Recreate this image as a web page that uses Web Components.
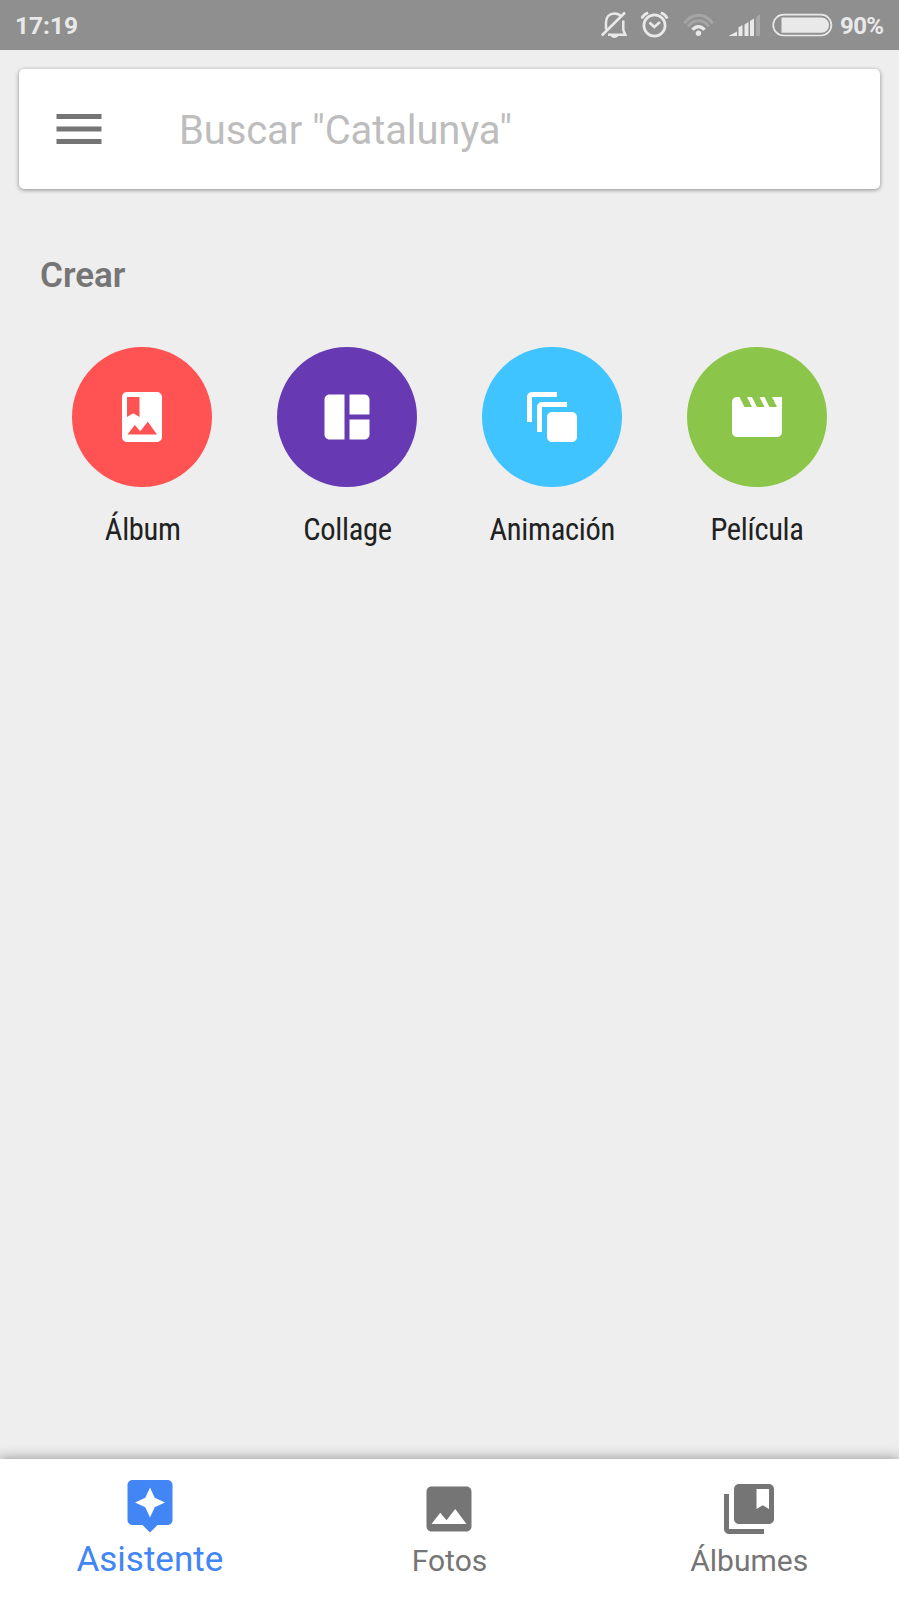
<!DOCTYPE html>
<html lang="es">
<head>
<meta charset="utf-8">
<title>Asistente</title>
<style>
html, body { margin: 0; height: 100%; background: #eeeeee; }
body { font-family: Roboto, "Noto Sans", sans-serif; }
</style>
</head>
<body>
<photos-app></photos-app>

<template id="t-app">
<style>
:host { display: flex; flex-direction: column; height: 100vh; min-height: 1599px; background: #eeeeee; overflow: hidden; }
main { flex: 1; padding: 19px 19px 0; }
</style>
<status-bar time="17:19" battery="90%"></status-bar>
<main>
<search-card>Buscar "Catalunya"</search-card>
<create-section heading="Crear">
<create-action icon="album" color="#ff5252">Álbum</create-action>
<create-action icon="collage" color="#673ab3">Collage</create-action>
<create-action icon="animation" color="#40c4ff">Animación</create-action>
<create-action icon="movie" color="#8bc54a">Película</create-action>
</create-section>
</main>
<nav-bar>
<nav-item icon="assistant" active>Asistente</nav-item>
<nav-item icon="photos">Fotos</nav-item>
<nav-item icon="albums">Álbumes</nav-item>
</nav-bar>
</template>

<template id="t-status">
<style>
:host { display: flex; align-items: center; height: 50px; background: #8f8f8f; color: #e9e9e9; font-size: 24.5px; font-weight: 700; line-height: 48px; }
.time { flex: 1; padding-left: 15px; }
.time, .level { padding-top: 2px; }
svg { display: block; height: 50px; }
.level { width: 59px; padding-left: 2px; font-size: 24px; letter-spacing: -.6px; }
</style>
<span class="time"></span>
<svg width="42" viewBox="594 0 42 50" fill="none" stroke="#e9e9e9" stroke-width="2.500"><path d="M606 29.500V22.500c0-5.500 3.500-9 8.500-9 3 0 5.300 1 6.800 3M623.300 20.500v9.500l2 4.700h-17.300M601.800 35.500L625 12.500"/><path d="M610.500 35.500h8c-.7 1.600-2 2.400-4 2.400s-3.300-.8-4-2.400z" fill="#e9e9e9" stroke="none"/></svg>
<svg width="40" viewBox="636 0 40 50" fill="none" stroke="#e9e9e9" stroke-width="2.700"><circle cx="654.500" cy="25.500" r="10.600"/><path d="M649.500 22.500l4.800 4.500 5.700-5M641.700 18.500c1.200-2.800 3.300-4.700 6.500-5.800M667.300 18.500c-1.200-2.800-3.300-4.700-6.500-5.800"/></svg>
<svg width="46" viewBox="676 0 46 50" fill="none" stroke-width="4"><path d="M684.300 23.500C692 12.500 705 12.500 712.700 23.500" stroke="#a5a5a5" stroke-width="3"/><path d="M688 26.500c5.500-7.700 15.500-7.700 21 0" stroke="#a5a5a5" stroke-width="3"/><path d="M692.500 29.800c3.400-4.300 8.600-4.300 12 0" stroke="#e9e9e9" stroke-width="3.300"/><circle cx="698.500" cy="33.200" r="2.700" fill="#e9e9e9"/></svg>
<svg width="46" viewBox="722 0 46 50" fill="#e9e9e9"><path d="M728.500 36l8.500-4.500V36zM738.500 27.500l4-2.500v11h-4zM744.500 24.500l4-2.500v14h-4zM750 21l4-2.500V36h-4z"/><path d="M756 17.500l4-3V36h-4z" fill="#a8a8a8"/></svg>
<svg width="70" viewBox="768 0 70 50"><rect x="773.200" y="14.700" width="58.200" height="20.800" rx="10.400" fill="none" stroke="#e9e9e9" stroke-width="1.700"/><path d="M781.500 17.500h40a7.500 7.500 0 0 1 0 15.200h-40z" fill="#e9e9e9"/></svg>
<span class="level"></span>
</template>

<template id="t-search">
<style>
:host { display: flex; align-items: center; height: 120px; border-radius: 5px; background: #fff; box-shadow: 0 1px 4px rgba(0,0,0,.42); color: #bdbdbd; font-size: 40px; line-height: 48px; }
svg { display: block; margin: 0 70px 0 30px; width: 60px; height: 60px; }
span { white-space: nowrap; letter-spacing: -.12px; padding-top: 4px; }
</style>
<svg viewBox="0 0 24 24" fill="#757575"><path d="M3 18h18v-2H3v2zm0-5h18v-2H3v2zm0-7v2h18V6H3z"/></svg>
<span><slot></slot></span>
</template>

<template id="t-section">
<style>
:host { display: block; margin: 67px 21px 0; }
h2 { margin: 0; font-size: 35px; line-height: 40px; font-weight: 560; color: #757575; }
.grid { display: grid; grid-template-columns: repeat(4, 1fr); margin-top: 51px; }
</style>
<h2></h2>
<div class="grid"><slot></slot></div>
</template>

<template id="t-action">
<style>
:host { display: flex; flex-direction: column; align-items: center; color: #212121; }
.disc { display: grid; place-items: center; width: 140px; height: 140px; border-radius: 50%; }
.disc svg { display: block; width: 60px; height: 60px; color: #fff; }
.label { margin-top: 25px; padding-left: .8px; font-size: 30.5px; line-height: 36px; font-stretch: 75%; letter-spacing: -.3px; }
</style>
<div class="disc"></div>
<div class="label"><slot></slot></div>
</template>

<template id="t-nav">
<style>
:host { display: grid; grid-template-columns: repeat(3, 1fr); height: 140px; background: #fff; box-shadow: 0 0 12px 1px rgba(0,0,0,.36); }
</style>
<slot></slot>
</template>

<template id="t-item">
<style>
:host { display: flex; flex-direction: column; align-items: center; color: #757575; padding-top: 20px; font-size: 30px; }
:host([active]) { color: #4285f4; padding-top: 16px; font-size: 35px; }
svg { display: block; width: 60px; height: 60px; }
span { line-height: 40px; margin-top: 2px; }
:host([active]) span { margin-top: 5px; }
</style>
<div class="icon"></div>
<span><slot></slot></span>
</template>

<script>
const ICONS = {
  album: 'M18 2H6c-1.100 0-2 .9-2 2v16c0 1.100.9 2 2 2h12c1.100 0 2-.9 2-2V4c0-1.100-.9-2-2-2zM6 4h5v8l-2.500-1.500L6 12V4zm.2 15l2.900-3.800 2.200 2.500 3-3.800L18 19H6.200z',
  collage: 'M11 21H5c-1.100 0-2-.9-2-2V5c0-1.100.9-2 2-2h6zM13 3h6c1.100 0 2 .9 2 2v6h-8zM13 13h8v6c0 1.100-.9 2-2 2h-6z',
  animation: 'M4 14H2V4c0-1.100.9-2 2-2h10v2H4zM8 18H6V8c0-1.100.9-2 2-2h10v2H8zM12 10h8c1.100 0 2 .9 2 2v8c0 1.100-.9 2-2 2h-8c-1.100 0-2-.9-2-2v-8c0-1.100.9-2 2-2z',
  movie: 'M18 4l2 4h-3l-2-4h-2l2 4h-3l-2-4H8l2 4H7L5 4H4c-1.100 0-2 .9-2 2v12c0 1.100.9 2 2 2h16c1.100 0 2-.9 2-2V4h-4z',
  assistant: 'M19 2H5c-1.100 0-2 .9-2 2v14c0 1.100.9 2 2 2h4l3 3 3-3h4c1.100 0 2-.9 2-2V4c0-1.100-.9-2-2-2zm-5.120 10.880L12 17l-1.880-4.120L6 11l4.120-1.880L12 5l1.880 4.120L18 11l-4.120 1.880z',
  photos: 'M21 19V5c0-1.100-.9-2-2-2H5c-1.100 0-2 .9-2 2v14c0 1.100.9 2 2 2h14c1.100 0 2-.9 2-2zM8.500 13.500l2.500 3.010L14.500 12l4.500 6H5l3.500-4.500z',
  albums: 'M4 6H2v14c0 1.100.9 2 2 2h14v-2H4V6zM20 2H8c-1.100 0-2 .9-2 2v12c0 1.100.9 2 2 2h12c1.100 0 2-.9 2-2V4c0-1.100-.9-2-2-2zm0 10l-2.500-1.500L15 12V4h5v8z'
};
const icon = name => `<svg viewBox="0 0 24 24" fill="currentColor"><path fill-rule="evenodd" d="${ICONS[name]}"/></svg>`;

class TemplateElement extends HTMLElement {
  connectedCallback() {
    if (this.shadowRoot) return;
    this.attachShadow({ mode: 'open' }).append(document.getElementById(this.constructor.template).content.cloneNode(true));
    this.fill(this.shadowRoot);
  }
  fill() {}
}
customElements.define('status-bar', class extends TemplateElement {
  static template = 't-status';
  fill(root) {
    root.querySelector('.time').textContent = this.getAttribute('time');
    root.querySelector('.level').textContent = this.getAttribute('battery');
  }
});
customElements.define('search-card', class extends TemplateElement { static template = 't-search'; });
customElements.define('create-section', class extends TemplateElement {
  static template = 't-section';
  fill(root) { root.querySelector('h2').textContent = this.getAttribute('heading'); }
});
customElements.define('create-action', class extends TemplateElement {
  static template = 't-action';
  fill(root) {
    const disc = root.querySelector('.disc');
    disc.style.background = this.getAttribute('color');
    disc.innerHTML = icon(this.getAttribute('icon'));
  }
});
customElements.define('nav-bar', class extends TemplateElement { static template = 't-nav'; });
customElements.define('nav-item', class extends TemplateElement {
  static template = 't-item';
  fill(root) { root.querySelector('.icon').innerHTML = icon(this.getAttribute('icon')); }
});
customElements.define('photos-app', class extends TemplateElement { static template = 't-app'; });
</script>
</body>
</html>
